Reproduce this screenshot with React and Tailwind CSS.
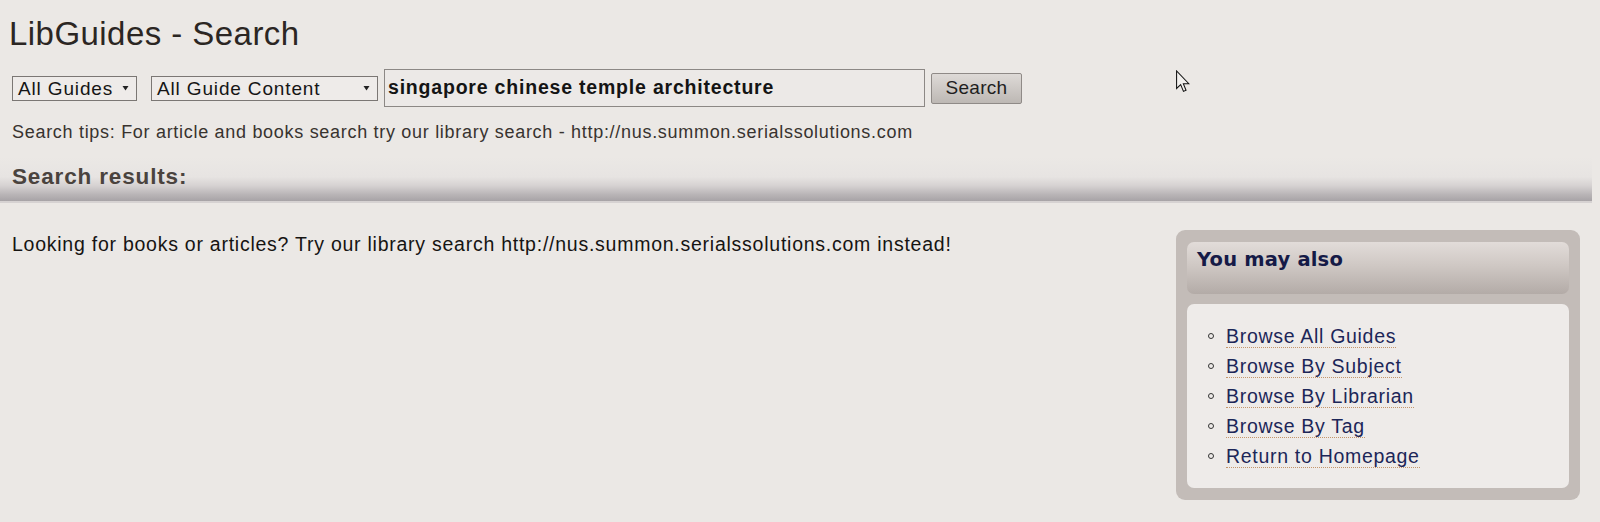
import React from 'react'

const LINKS = ['Browse All Guides', 'Browse By Subject', 'Browse By Librarian', 'Browse By Tag', 'Return to Homepage']

function FakeSelect({ label, width }) {
  return (
    <div className={`${width} h-[25px] border border-[#7b7774] bg-[#eeebe9] flex items-center justify-between pl-[5px] pr-[7px]`}>
      <span className="text-[19px] leading-none tracking-[0.85px] text-[#151515]">{label}</span>
      <svg width="7" height="6" viewBox="0 0 7 6"><path d="M0.5 1 L6.5 1 L3.5 5.5 Z" fill="#222" /></svg>
    </div>
  )
}

export default function App() {
  return (
    <div className="relative min-h-[522px] overflow-hidden bg-[#ebe8e5] font-['Liberation_Sans',Arial,sans-serif] text-[#2a2623]">
      <h1 className="pl-[9px] pt-[15px] text-[33px] leading-[38px] tracking-[0.45px] text-[#2b2623]">LibGuides - Search</h1>

      <div className="mt-[16px] flex items-center pl-[12px]">
        <FakeSelect label="All Guides" width="w-[125px]" />
        <div className="w-[14px]" />
        <FakeSelect label="All Guide Content" width="w-[227px]" />
        <div className="ml-[6px] h-[38px] w-[541px] border border-[#8c8885] bg-[#ece9e7] flex items-center pl-[3px]">
          <span className="text-[19.5px] font-bold tracking-[0.8px] text-[#141414]">singapore chinese temple architecture</span>
        </div>
        <button className="ml-[6px] h-[31px] w-[91px] rounded-[2px] border border-[#8f8a87] bg-gradient-to-b from-[#dedad7] to-[#bdb8b4] text-[19px] tracking-[0.3px] text-[#1e1e1e]">
          Search
        </button>
      </div>

      <p className="mt-[14px] pl-[12px] text-[18px] leading-[22px] tracking-[0.7px] text-[#38332f]">
        Search tips: For article and books search try our library search - http://nus.summon.serialssolutions.com
      </p>

      <div className="mt-[14px] mr-[8px] h-[46px] border-b-2 border-[#d6d2d2] bg-[linear-gradient(to_bottom,#ebe8e5_0%,#e7e4e2_45%,#d6d2d2_65%,#b9b5b7_85%,#a7a3a6_100%)] pl-[12px] pt-[6px]">
        <h2 className="text-[22.5px] font-bold leading-[28px] tracking-[0.85px] text-[#4a433e]">Search results:</h2>
      </div>

      <div className="flex">
        <div className="flex-1 pl-[12px] pt-[30px]">
          <p className="text-[19.5px] leading-[22px] tracking-[0.75px] text-[#161412]">
            Looking for books or articles? Try our library search http://nus.summon.serialssolutions.com instead!
          </p>
        </div>

        <div className="mr-[20px] mt-[27px] w-[404px] rounded-[9px] bg-[#c3bcb8] px-[11px] pt-[12px] pb-[12px]">
          <div className="h-[52px] rounded-[7px] bg-[linear-gradient(to_bottom,#e2dcd9_0%,#cfc8c4_45%,#b3aba7_100%)] pl-[10px] pt-[6px]">
            <h3 className="font-['DejaVu_Sans',Verdana,sans-serif] text-[19.5px] font-bold leading-[24px] tracking-[0.2px] text-[#151a47]">You may also</h3>
          </div>
          <ul className="mt-[10px] rounded-[7px] bg-[#eeebe9] pl-[21px] pt-[17px] pb-[17px]">
            {LINKS.map(l => (
              <li key={l} className="flex h-[30px] items-center">
                <span className="mr-[12px] h-[6px] w-[6px] rounded-full border border-[#333]" />
                <a className="border-b border-dotted border-[#c4956a] text-[19.5px] leading-[22px] tracking-[0.7px] text-[#1c2658]">{l}</a>
              </li>
            ))}
          </ul>
        </div>
      </div>

      {/* mouse pointer */}
      <svg className="absolute left-[1176px] top-[70px]" width="14" height="23" viewBox="0 0 12 19">
        <path d="M0.5 0.5 L0.5 15.5 L4 12.2 L6.4 18 L8.6 17 L6.3 11.4 L11 11.4 Z" fill="#f2f0ee" stroke="#111" strokeWidth="0.9" strokeLinejoin="miter" />
      </svg>
    </div>
  )
}
